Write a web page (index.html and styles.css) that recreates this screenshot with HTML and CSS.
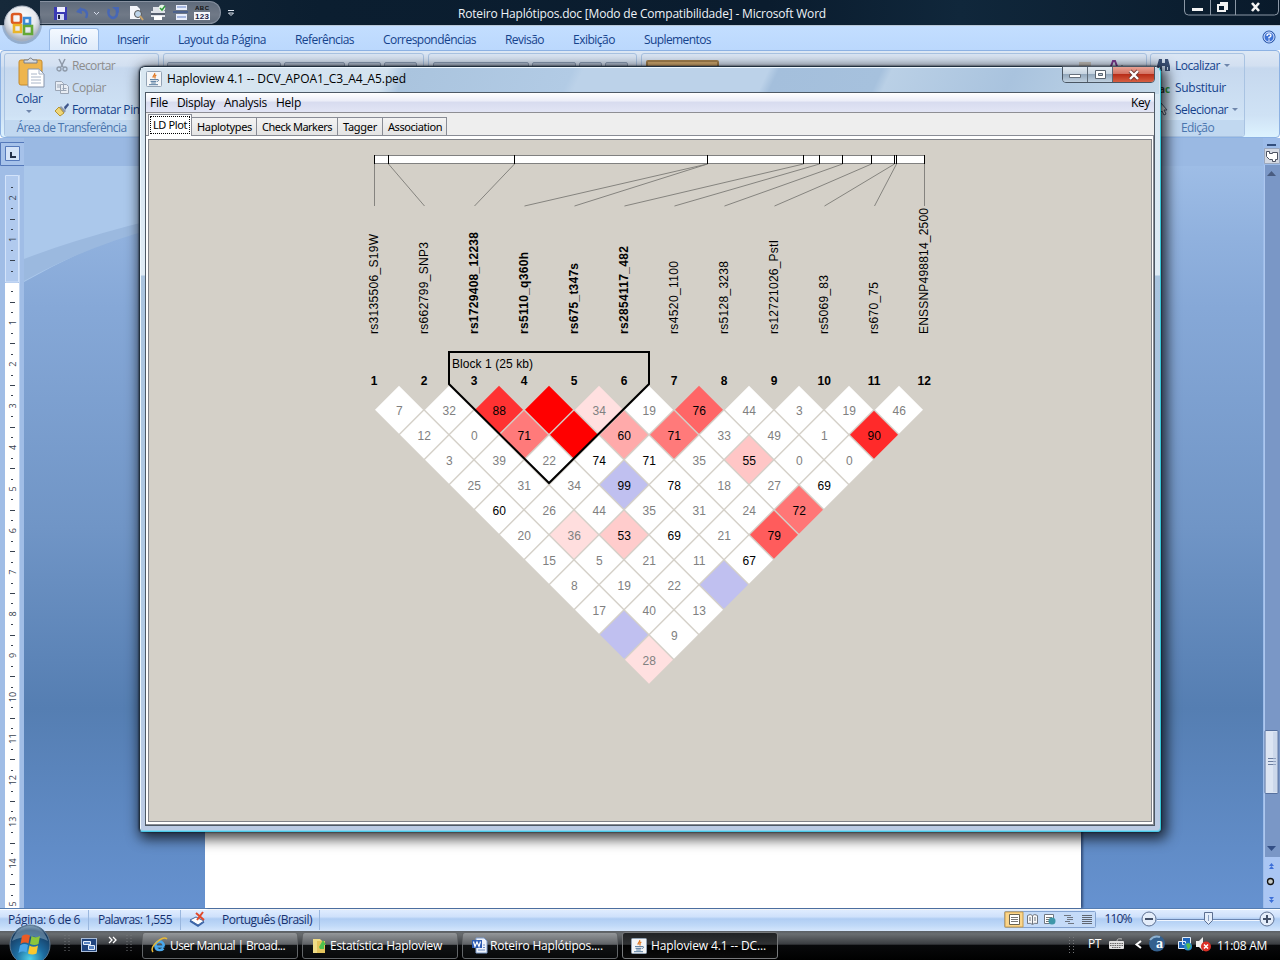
FILE: index.html
```html
<!DOCTYPE html>
<html lang="pt-BR">
<head>
<meta charset="utf-8">
<title>Roteiro Haplótipos.doc - Microsoft Word</title>
<link rel="stylesheet" href="styles.css">
</head>
<body>
<svg width="0" height="0" class="defs">
  <defs>
    <radialGradient id="orb" cx=".5" cy=".35" r=".65"><stop offset="0" stop-color="#fff"/><stop offset=".6" stop-color="#e6e9ee"/><stop offset="1" stop-color="#9ca6b5"/></radialGradient>
    <radialGradient id="start" cx=".5" cy=".85" r=".9"><stop offset="0" stop-color="#4fd0e8"/><stop offset=".4" stop-color="#1d6ba0"/><stop offset=".8" stop-color="#16395e"/><stop offset="1" stop-color="#8cabc4"/></radialGradient>
    <symbol id="java" viewBox="0 0 16 16"><rect x=".5" y=".5" width="15" height="15" rx="1" fill="#f4f6f8" stroke="#93a3b5"/><path d="M8.6 2c1.4 1.8-2.6 2.7-1.4 4.8M10.3 4c-2.4 1.2-1.6 2-1 3.4" fill="none" stroke="#e07822" stroke-width="1.2"/><path d="M4 8.6h7M4.6 10.4h5.6M5.2 12h4.6M3 13.7h9M11 8.6c2.4-.5 2 1.6-.2 2" fill="none" stroke="#557a9e"/></symbol>
  </defs>
</svg>
<div class="desktop">
  <header class="titlebar">
    <div class="quick">
      <svg width="181" height="22" viewBox="40 2 181 22">
        <path d="M54 7h13v13H54z" fill="#3a3ab4"/><path d="M57 7h8v5h-8z" fill="#eef"/><path d="M57 14h7v6h-7z" fill="#d5daf4"/><path d="M58 15h2v4h-2z" fill="#224"/>
        <path d="M78 11c6-4 11 1 8 7" fill="none" stroke="#4767b5" stroke-width="2.4"/><path d="M76 12l5-5 1 7z" fill="#4767b5"/>
        <path d="M94 12l2.500 2.500 2.500-2.500" fill="none" stroke="#d5dcec"/>
        <path d="M109 9c-3 9 7 12 8 5V8" fill="none" stroke="#4767b5" stroke-width="2.600"/><path d="M112 7h7v6z" fill="#4767b5"/>
        <path d="M130 6h7l3 3v10h-10z" fill="#f4f6fb"/><circle cx="138" cy="14" r="3.500" fill="#bdd4ea" stroke="#555"/><path d="M140 16l3 4" stroke="#c9a46a" stroke-width="2"/>
        <path d="M153 7h8v5h-8zM151 11h14v6h-14z" fill="#dfe2e8"/><path d="M151 13h14v2h-14z" fill="#555e6e"/><path d="M154 16h8v4h-8z" fill="#fff"/><circle cx="162" cy="8" r="3.200" fill="#e8f5e8"/><path d="M160 8l2 2 3-4" fill="none" stroke="#2f9a3c" stroke-width="1.500"/>
        <path d="M176 5h11v5h-11zM176 14h11v6h-11z" fill="#e8eefb"/><path d="M177 7h9M177 17h9" stroke="#6581c4"/><path d="M173 12h15" stroke="#2d4f96"/>
        <path d="M194 12h16v8h-16z" fill="#f4f6fb"/><text x="195" y="10" class="abc" textLength="14">ABC</text><text x="195" y="19" class="n123" textLength="14">123</text>
      </svg>
    </div>
    <svg class="more" width="8" height="8"><path d="M1 1.500h6M1.500 4h5L4 6.500z" fill="none" stroke="#dfe6f0"/></svg>
    <span class="doc-title" data-fit="368">Roteiro Haplótipos.doc [Modo de Compatibilidade] - Microsoft Word</span>
    <svg class="word-controls" width="96" height="17" viewBox="0 0 96 17"><path d="M.5 0v11q0 4 4 4h86q4 0 4-4V0M26.500 0v15M51.500 0v15" fill="none" stroke="#8b97a5"/><path d="M8 8h11v3H8z" fill="#f3f3f3"/><path d="M36 3h7v7M34 5h7v6h-7z" fill="none" stroke="#f3f3f3" stroke-width="2"/><path d="M68 3l7 8M75 3l-7 8" stroke="#f3f3f3" stroke-width="2.600"/></svg>
  </header>

  <nav class="tabs">
    <span class="tab on"><span data-fit="27">Início</span></span>
    <span data-fit="32">Inserir</span>
    <span data-fit="88">Layout da Página</span>
    <span data-fit="59">Referências</span>
    <span data-fit="93">Correspondências</span>
    <span data-fit="39">Revisão</span>
    <span data-fit="42">Exibição</span>
    <span data-fit="67">Suplementos</span>
    <svg class="help" width="14" height="14"><circle cx="7" cy="7" r="6" fill="#3f73d6" stroke="#234e9e"/><circle cx="7" cy="7" r="5" fill="none" stroke="#dce9ff"/><path d="M5 6q0-2.200 2-2.200T9 5.500Q9 6.600 7 7.400V8.500M7 9.400v1.400" fill="none" stroke="#fff" stroke-width="1.300"/></svg>
  </nav>

  <section class="ribbon">
    <div class="group clip">
      <div class="group-body">
        <div class="paste">
          <svg width="28" height="32" viewBox="0 0 28 32"><rect x="1" y="3" width="23" height="25" rx="2" fill="#eeb54e" stroke="#c48a2d"/><path d="M6 6V3h4q2.500-4 5 0h4v3z" fill="#d6dae0" stroke="#777f8b"/><path d="M10 12h11l5 5v13H10z" fill="#fff" stroke="#8694ab"/><path d="M21 12v5h5M13 17h6M13 20h10M13 23h10M13 26h10" fill="none" stroke="#aab6c8"/></svg>
          <span data-fit="27">Colar</span>
          <i class="caret"></i>
        </div>
        <div class="stack">
          <div class="row dim"><svg width="14" height="16"><path d="M4 2l4 8M10 2L6 10" stroke="#8e99a8" stroke-width="1.500"/><circle cx="4" cy="12" r="2" fill="none" stroke="#8e99a8" stroke-width="1.300"/><circle cx="10" cy="12" r="2" fill="none" stroke="#8e99a8" stroke-width="1.300"/></svg><span data-fit="43">Recortar</span></div>
          <div class="row dim"><svg width="14" height="16"><path d="M.5 2.500h6l2 2v7h-8zM5.500 5.500h6l2 2v7h-8z" fill="#e8edf4" stroke="#9aa5b5"/><path d="M2 6h3M2 8h3M7.500 9.500h4M7.500 11.500h4" stroke="#9aa5b5"/></svg><span data-fit="34">Copiar</span></div>
          <div class="row"><svg width="14" height="16"><path d="M9 6l4-4 1 2-4 5z" fill="#3f568c"/><path d="M6 5l5 5-2 2-5-5z" fill="#8f98a8"/><path d="M4 6l5 6-4 3-5-5z" fill="#efd678" stroke="#b4942f"/></svg><span data-fit="82">Formatar Pincel</span></div>
        </div>
      </div>
      <div class="group-name"><span data-fit="110">Área de Transferência</span></div>
    </div>
    <div class="group font"><i class="box b1"></i><i class="box b2"></i><i class="box b3"></i><i class="box b3"></i></div>
    <div class="group para"><i class="box b4"></i><i class="box b2"></i><i class="box b5"></i><i class="box b5"></i></div>
    <div class="group style"><i class="picked"></i><svg class="change" width="48" height="10"><path d="M2 2h12v8H2z" fill="#c5c1bc"/><path d="M33 9l3-8h2l3 8" fill="none" stroke="#7b3a8f" stroke-width="2"/><path d="M45 5v5" stroke="#666"/></svg></div>
    <div class="group edit">
      <div class="stack">
        <div class="row"><svg width="16" height="16"><path d="M3 2h3v4h3V2h3l2 7v5h-5V9H6v5H1V9z" fill="#3c5178"/><path d="M3 10h1v3H3zM11 10h1v3h-1z" fill="#cfe0f5"/></svg><span data-fit="45">Localizar</span><i class="caret"></i></div>
        <div class="row"><svg width="16" height="16"><text x="3" y="14" class="ac">a<tspan fill="#2f9a3c">c</tspan></text></svg><span data-fit="51">Substituir</span></div>
        <div class="row"><svg width="16" height="16"><path d="M5 2l6 7-3 0 2 4-2 1-2-4-2 2z" fill="#fff" stroke="#4b5b75"/></svg><span data-fit="53">Selecionar</span><i class="caret"></i></div>
      </div>
      <div class="group-name"><span data-fit="33">Edição</span></div>
    </div>
  </section>

  <main class="workspace">
    <div class="left-rail">
      <svg id="ruler" width="24" height="770" viewBox="0 138 24 770"></svg>
    </div>
    <div class="canvas">
      <svg class="swoosh" width="240" height="145" viewBox="24 138 240 145"><path d="M24 166H264V200Q150 211 24 282z" fill="#abc8eb"/><path d="M24 259Q110 226 264 195V208Q130 222 24 281z" fill="#9bb9df"/><path d="M24 138h240v28H24z" fill="#9ab9e3"/></svg>
      <div class="page"></div>
    </div>
    <svg class="scroll" width="17" height="770" viewBox="1263 138 17 770">
      <path d="M1263 138h17v770h-17z" fill="#9dbce9"/><path d="M1264 165h16v692h-16z" fill="#7a97c6"/><path d="M1264.500 165v692" stroke="#adc7ee"/>
      <path d="M1267 144h9v2h-9z" fill="#334f7d"/><path d="M1264.500 148.500h15v15h-15z" fill="#d4d9e3" stroke="#9ba8be"/><path d="M1266.500 151.500h3v2h3v-1h5v7h-2v2h-3v-2h-3l-3-3z" fill="#fff" stroke="#4c5262"/>
      <path d="M1267 176l4.500-5 4.500 5z" fill="#495c80"/>
      <rect x="1265" y="730.500" width="13" height="63" rx="1" fill="#dce5f3" stroke="#56709e"/><path d="M1268 758.500h8M1268 761.500h8M1268 764.500h8" stroke="#6a7d9f"/><path d="M1273 732h4v60h-4z" fill="#bccbe3" opacity=".5"/>
      <path d="M1267 846l4.500 5 4.500-5z" fill="#334f85"/><path d="M1264 857h16v51h-16z" fill="#aac6f3"/>
      <path d="M1269 866l2.500-3 2.500 3zM1269 869l2.500-3 2.500 3zM1269 897l2.500 3 2.500-3zM1269 900l2.500 3 2.500-3z" fill="#3d6fd8"/><circle cx="1270.500" cy="881.500" r="3" fill="#c5c9c5" stroke="#111" stroke-width="1.300"/>
    </svg>
  </main>

  <footer class="status">
    <span class="cell c1"><span data-fit="72">Página: 6 de 6</span></span>
    <span class="cell c2"><span data-fit="74">Palavras: 1,555</span></span>
    <svg class="proof" width="17" height="16"><path d="M1 9l6-3 8 4-6 4z" fill="#fff" stroke="#45679e"/><path d="M1 10l8 5 6-4" fill="none" stroke="#3b64a8" stroke-width="1.500"/><path d="M7 2l8 7M14 1L8 9" stroke="#e0492c" stroke-width="2"/></svg>
    <span class="cell c3"><span data-fit="90">Português (Brasil)</span></span>
    <svg class="views" width="276" height="22" viewBox="1004 909 276 22">
      <rect x="1004.500" y="911.500" width="91" height="16" rx="1" fill="#c5dbf8" stroke="#83a2cf"/><path d="M1005 912h18v15h-18z" fill="#fbd58a" stroke="#c79b4a"/>
      <path d="M1009.500 914.500h10v10h-10z" fill="#fff" stroke="#6b6450"/><path d="M1011 917.500h7M1011 919.500h7M1011 921.500h7" stroke="#777"/>
      <path d="M1027.500 915.500q3-2 5 0 2-2 5 0v8q-3-1-5 1-2-2-5-1zM1032.500 916v8M1029 918h2M1029 920h2M1034 918h2M1034 920h2" fill="#f7f7f7" stroke="#6f7681"/>
      <path d="M1044.500 914.500h9v9h-9z" fill="#fff" stroke="#6f7681"/><path d="M1046 917.500h6M1046 919.500h6M1046 921.500h4" stroke="#777"/><circle cx="1052" cy="921" r="3.500" fill="#3e96a8"/>
      <path d="M1064 915.500h7M1067 917.500h6M1067 919.500h6M1065 921.500h5M1068 923.500h6" stroke="#6f7681"/><path d="M1082 915.500h10M1082 917.500h10M1082 919.500h10M1082 921.500h10M1082 923.500h10" stroke="#5f6671"/>
      <text x="1104.500" y="923" class="zoomtxt" textLength="28">110%</text>
      <path d="M1157 919.500h103" stroke="#6c87b3"/><path d="M1157 920.500h103" stroke="#f0f6ff"/>
      <circle cx="1149" cy="919" r="7" fill="#e4edfa" stroke="#5c6f91"/><path d="M1145 919h8" stroke="#435068" stroke-width="2"/>
      <circle cx="1267" cy="919" r="7" fill="#e4edfa" stroke="#5c6f91"/><path d="M1263 919h8M1267 915v8" stroke="#435068" stroke-width="2"/>
      <path d="M1204.500 912.500h8v8l-4 4-4-4z" fill="#e4edfa" stroke="#5c6f91"/><path d="M1208.500 915v6" stroke="#8ba0c0"/>
    </svg>
  </footer>

  <div class="taskbar">
    <svg class="launch" width="142" height="29" viewBox="0 931 142 29">
      <path d="M65 935v18M69 935v18M127 935v18M131 935v18" stroke="#77797c" stroke-dasharray="1 2"/>
      <rect x="81.500" y="938.500" width="15" height="13" fill="#20447e" stroke="#a9bcd8"/><path d="M83.500 941.500h7v3h-7zM88.500 945.500h6v4h-6z" fill="#5b84c0" stroke="#e8f0fb"/>
      <path d="M109 937l3 3-3 3M113 937l3 3-3 3" fill="none" stroke="#fff" stroke-width="1.300"/>
    </svg>
    <div class="task"><svg width="17" height="17"><path d="M13.500 9.500H4.500q.5 3.500 4 3.500 2.500 0 4-1.500M4.500 8.500q.5-4 4-4t4.500 4.500" fill="none" stroke="#49a8ec" stroke-width="2.600"/><path d="M2 15Q-1 11 6 5T16 2" fill="none" stroke="#e8b936" stroke-width="1.500"/></svg><span data-fit="115">User Manual | Broad...</span></div>
    <div class="task"><svg width="17" height="17"><path d="M2 2h7l2 2v12H2z" fill="#f0dc86"/><path d="M6 4h8v12H6z" fill="#e4c45c"/><path d="M8 10l4-7 3 5h-2v4H9z" fill="#4fc04d"/></svg><span data-fit="112">Estatística Haploview</span></div>
    <div class="task"><svg width="17" height="17"><path d="M5 1h8l3 3v12H5z" fill="#eef3fc" stroke="#7f9ccc"/><path d="M1 3h10v8H1z" fill="#2c5bb4"/><path d="M2.500 4.500l1.500 5 2-4.500 2 4.500 1.500-5" fill="none" stroke="#fff" stroke-width="1.200"/><path d="M7 13h7M12 8h2M12 10.500h2" stroke="#6c8cc4"/></svg><span data-fit="113">Roteiro Haplótipos....</span></div>
    <div class="task pressed"><svg width="16" height="16"><use href="#java"/></svg><span data-fit="115">Haploview 4.1 -- DC...</span></div>
    <div class="tray">
      <svg width="8" height="24"><path d="M1.500 3v18M5.500 3v18" stroke="#77797c" stroke-dasharray="1 2"/></svg>
      <span class="lang" data-fit="13">PT</span>
      <svg class="devices" width="110" height="29" viewBox="1107 929 110 29">
        <rect x="1109" y="939" width="15" height="8" rx="1" fill="#e0e0e0"/><path d="M1110 941.500h13M1110 943.500h13M1112 945.500h9" stroke="#666" stroke-dasharray="1.500 .8"/><path d="M1117 939q0-3 5-2" fill="none" stroke="#bbb"/>
        <path d="M1141 939l-4.500 3.500 4.500 3.500" fill="none" stroke="#fff" stroke-width="2"/>
        <circle cx="1157" cy="941.500" r="8" fill="#34608e"/><path d="M1150 938q4-5 10-3" stroke="#8eb1d0" fill="none" stroke-width="2"/><text x="1156" y="946" class="avast">a</text>
        <path d="M1182.500 935.500h8v7h-8zM1178.500 939.500h7v7h-7z" fill="#1f65bb" stroke="#e4edf8"/><circle cx="1188" cy="944.500" r="4" fill="#2b8bc8"/><path d="M1186 942l3-1 2 3-3 4z" fill="#58be4b"/>
        <path d="M1196 939h3l4-4v14l-4-4h-3z" fill="#eee"/><circle cx="1206" cy="944.500" r="5" fill="#db2f26"/><path d="M1204 942.500l4 4M1208 942.500l-4 4" stroke="#fff" stroke-width="1.500"/>
      </svg>
      <span class="clock" data-fit="50">11:08 AM</span>
    </div>
  </div>
</div>

<svg class="office-orb" width="44" height="44"><circle cx="22" cy="21" r="20" fill="#17283a" opacity=".25"/><circle cx="22" cy="20.500" r="17.500" fill="url(#orb)" stroke="#a9b2c0"/><g fill="none" stroke-width="2.600"><rect x="12" y="11" width="9" height="9" rx="2" stroke="#dc5a22"/><path d="M24 15h6v6h-6z" stroke="#3b8bd6"/><path d="M14 22h7v7h-7z" stroke="#eab52a"/><path d="M24 23h8v8h-8z" stroke="#63a836"/></g></svg>
<svg class="start-orb" width="44" height="36"><circle cx="22" cy="21" r="20" fill="url(#start)" stroke="#5b7790"/><path d="M4 17q18-9 36 0Q35 2 22 2T4 17z" fill="#b4cfe0" opacity=".4"/><path d="M14 12q4-2.500 8-.5l-1.500 8q-4-2-8 .5z" fill="#ea5b26"/><path d="M23.500 12q4 2.500 8.500 0l-1.500 8q-4 2-8.500 0z" fill="#8cc63c"/><path d="M12 21.500q4-2.500 8-.5l-1.500 7.500q-4-2-8 .5z" fill="#4aa5e8"/><path d="M21.500 21.500q4 2.500 8.500 0l-1.500 8q-4 2-8.500 0z" fill="#fbc82e"/></svg>

<div class="window">
  <div class="win-title">
    <svg width="16" height="16"><use href="#java"/></svg>
    <span data-fit="239">Haploview 4.1 -- DCV_APOA1_C3_A4_A5.ped</span>
    <div class="win-buttons">
      <i class="wb"><svg width="25" height="16"><path d="M6.500 7.500h11v3h-11z" fill="#fff" stroke="#66707c"/></svg></i>
      <i class="wb"><svg width="25" height="16"><path d="M7.500 3.500h10v8h-10z" fill="#fff" stroke="#5a6470"/><path d="M10.500 6.500h4v2h-4z" fill="#bcc8d4" stroke="#5a6470"/></svg></i>
      <i class="wb close"><svg width="42" height="16"><path d="M17 4l8 8M25 4l-8 8" stroke="#6f3a35" stroke-width="4"/><path d="M17 4l8 8M25 4l-8 8" stroke="#fff" stroke-width="2.400"/></svg></i>
    </div>
  </div>
  <div class="client">
    <div class="menu"><span data-fit="18">File</span><span data-fit="38">Display</span><span data-fit="43">Analysis</span><span data-fit="25">Help</span><span class="key" data-fit="19">Key</span></div>
    <div class="plot-tabs">
      <div class="ptab active"><span data-fit="34">LD Plot</span></div>
      <div class="ptab"><span data-fit="55">Haplotypes</span></div>
      <div class="ptab wide"><span data-fit="70">Check Markers</span></div>
      <div class="ptab wide"><span data-fit="34">Tagger</span></div>
      <div class="ptab"><span data-fit="54">Association</span></div>
    </div>
    <div class="pane"><svg id="plot" width="1002" height="681" viewBox="149 140 1002 681"></svg></div>
  </div>
</div>
<script src="app.js"></script>
</body>
</html>
```

FILE: styles.css
```css
* { box-sizing: border-box; }
body { margin: 0; width: 1280px; height: 960px; overflow: hidden; position: relative; font: 12px/16px "Open Sans", "Noto Sans", sans-serif; color: #15428b; }
svg { display: block; flex: none; }
.defs { position: absolute; }
[data-fit] { display: inline-block; white-space: nowrap; flex: none; }
.desktop { width: 1280px; height: 960px; display: flex; flex-direction: column; }

.titlebar { height: 26px; flex: none; display: flex; align-items: flex-start; padding-left: 40px; background: linear-gradient(90deg, #16293a 0, #0b1e30 25%, #0a1c2e 60%, #10273b 75%, #091a2b 100%); border-bottom: 1px solid #b9c8d8; }
.quick { margin-top: 1px; width: 181px; height: 23px; border-radius: 0 12px 12px 0; background: linear-gradient(#5f6b7b, #707987 60%, #626d7c); border: 1px solid #8791a0; border-left: 0; }
.abc { font: bold 6px "Liberation Sans", sans-serif; fill: #111; }
.n123 { font: bold 8px "Liberation Sans", sans-serif; fill: #224; }
.more { margin: 9px 0 0 6px; }
.doc-title { margin: 6px 0 0 223px; color: #eef3f8; }
.word-controls { margin-left: auto; }

.tabs { height: 24px; flex: none; display: flex; gap: 29px; padding: 6px 4px 0 49px; background: linear-gradient(#c3deff, #bbd8fd); }
.tab.on { width: 50px; height: 22px; margin: -4px -11px 0 0; padding: 3px 0 0 10px; border: 1px solid #97b9e6; border-bottom: 0; border-radius: 3px 3px 0 0; background: linear-gradient(#f4f9ff, #dfebfa); }
.help { margin: -2px 0 0 auto; }

.ribbon { height: 88px; flex: none; display: flex; padding: 2px 2px 2px 3px; border: 1px solid #8db2e3; border-radius: 4px; background: linear-gradient(#dde8f5 0, #d3e0f1 17%, #c6d8ee 20%, #cfe2f5 75%, #ddf3ff 100%); }
.group { border: 1px solid #a9c3e2; border-radius: 3px; height: 84px; display: flex; flex: none; overflow: hidden; }
.clip { width: 155px; flex-direction: column; }
.group-body { height: 68px; display: flex; }
.paste { width: 50px; display: flex; flex-direction: column; align-items: center; padding: 3px 0 0 2px; }
.paste svg { margin-left: 2px; }
.paste span { margin: 2px 0 0 -4px; }
.caret { border: 3px solid transparent; border-top-color: #6f86ab; border-bottom: 0; }
.paste .caret { margin: 3px 0 0 -4px; }
.stack { display: flex; flex-direction: column; }
.row { height: 22px; display: flex; align-items: center; gap: 3px; flex: none; }
.row span { margin-top: 1px; }
.dim { color: #8d8d8d; }
.group-name { height: 16px; flex: none; text-align: center; line-height: 16px; color: #4a75ae; background: #c1d8f0; }
.clip .group-name { padding-right: 20px; }
.font { width: 261px; margin-left: 4px; padding: 8px 3px; }
.para { width: 209px; margin-left: 4px; padding: 8px 4px; }
.style { width: 506px; margin-left: 4px; padding: 6px 4px; }
.box { height: 20px; border: 1px solid #8b9db5; background: #b5c3d6; margin-right: 3px; border-radius: 2px; }
.b1 { width: 117px; } .b2 { width: 62px; } .b3 { width: 34px; } .b4 { width: 96px; } .b5 { width: 23px; }
.para .b2 { width: 44px; }
.picked { width: 73px; height: 24px; border: 2px solid #a3814e; background: #d5ad72; border-radius: 2px; }
.change { margin-left: 358px; }
.edit { width: 95px; margin-left: 3px; flex-direction: column; }
.edit .stack { height: 68px; padding-left: 5px; }
.edit .caret { margin-left: 1px; }
.ac { font: bold 10px "Open Sans", sans-serif; fill: #333; }

.workspace { height: 770px; flex: none; display: flex; background: linear-gradient(#9ab9e3 0, #9ab9e3 28px, #9ebde6 28px, #90b1de 100px, #86a8d7 170px, #7095c6 390px, #557eb2 570px, #6692d0 100%); }
.left-rail { width: 24px; background: #a0bde6; }
.canvas { width: 1239px; display: flex; align-items: flex-end; }
.swoosh { align-self: flex-start; margin-right: -240px; }
.page { width: 876px; height: 690px; margin-left: 181px; background: #fff; box-shadow: 2px 0 2px #35517e; z-index: 1; }

.status { height: 23px; flex: none; display: flex; align-items: center; color: #15306f; border-top: 1px solid #567db1; background: linear-gradient(#e2eeff 0, #cfe1fb 35%, #b0cdf3 45%, #c0d9f8 75%, #d5e6fc 100%); box-shadow: inset 0 1px #fff; }
.cell { height: 20px; padding-top: 2px; border-right: 1px solid #9ab7de; }
.c1 { width: 89px; padding-left: 8px; } .c2 { width: 92px; padding-left: 9px; }
.c3 { width: 106px; padding-left: 8px; margin-left: 8px; }
.proof { margin: -2px 0 0 8px; }
.views { margin-left: auto; }
.zoomtxt { font: 12px "Open Sans", sans-serif; fill: #15306f; }

.taskbar { height: 29px; flex: none; display: flex; color: #fff; background: linear-gradient(#5b6065 0, #696d70 10%, #3b3e42 45%, #08090b 50%, #000 100%); }
.task { width: 156px; height: 27px; margin: 1px 4px 0 0; padding: 0 0 0 8px; display: flex; align-items: center; gap: 2px; border: 1px solid #626568; border-radius: 3px; background: linear-gradient(#94979a 0, #606367 45%, #101214 50%, #08090a 100%); flex: none; }
.pressed { gap: 4px; background: linear-gradient(#202224, #303234 45%, #030303 50%, #0a0a0a); border-color: #77797b; }
.tray { flex: 1; display: flex; align-items: center; padding-left: 286px; }
.lang { margin-left: 12px; margin-top: -4px; }
.devices { margin-left: 6px; }
.avast { font: bold 14px "Liberation Serif", serif; fill: #fff; }

.office-orb { position: absolute; left: 0; top: 3px; }
.start-orb { position: absolute; left: 8px; top: 924px; }

.window { position: absolute; z-index: 2; left: 139px; top: 66px; width: 1022px; height: 766px; padding: 0 6px; border-radius: 6px 6px 4px 4px; border: 1px solid #20303f; border-right-color: #35c8d8; border-bottom-color: #4ac7e6; background: linear-gradient(#d7e6f2 0, #dfebf5 208px, #aac4df 209px, #b2cbe5 75%, #bccbe4 100%); box-shadow: inset 1px 1px #eef8ff, inset 0 -1px #8bd5ee, 3px 4px 13px 3px rgba(0,0,0,.72), 0 0 2px #001; color: #000; }
.win-title { height: 26px; margin: 1px -5px 0; padding: 3px 4px 0 5px; display: flex; gap: 5px; background: linear-gradient(115deg, #d9e7f1 0, #d3e2ef 24%, #aac4de 26%, #b2cbe5 42%, #bcd2e9 43%, #bcd2e9 61%, #a4bfdc 62%, #a6c1dd 72%, #bad0e6 73%, #a9c3de 85%, #c4d8e9 100%); }
.win-buttons { margin: -5px 0 0 auto; display: flex; height: 17px; width: 93px; border: 1px solid #4a5663; border-radius: 0 0 4px 4px; overflow: hidden; }
.wb { width: 25px; border-right: 1px solid #5c6875; background: linear-gradient(#e1eaf2, #c4d2df 48%, #93a8bc 50%, #c0d1e0); }
.close { width: 42px; border: 0; background: linear-gradient(#e8a294, #d27060 48%, #b82d18 50%, #d65f42); }
.client { width: 1010px; height: 734px; margin: -2px 0 0 -1px; border: 1px solid #4d5965; background: #eee; }
.menu { height: 20px; display: flex; gap: 9px; padding: 3px 4px 0; line-height: 14px; border-bottom: 1px solid #8e8e94; background: linear-gradient(#fff, #eceef8 40%, #d8dcef 50%, #e2e5f5); }
.key { margin-left: auto; }
.plot-tabs { height: 22px; display: flex; align-items: flex-end; padding-left: 2px; font: 11px/14px "Noto Sans", sans-serif; }
.ptab { height: 18px; padding: 2px 4px 0 5px; border: 1px solid #898c95; border-left: 0; border-bottom: 0; background: linear-gradient(#f3f3f3, #e4e4e4); }
.wide { padding-right: 5px; }
.active { position: relative; height: 22px; width: 44px; margin-bottom: -1px; padding: 3px 4px 0; background: #fff; border-left: 1px solid #898c95; outline: 1px dotted #000; outline-offset: -3px; }
.pane { height: 690px; padding: 4px 2px 3px 3px; border: 1px solid #898c95; border-left: 0; background: #fff; }
.pane svg { outline: 1px solid #808288; background: #d4d0c8; }
#plot text { font: 12px "Liberation Sans", sans-serif; }
#plot .b { font-weight: bold; }
#ruler text { font: 9px "Open Sans", sans-serif; fill: #39424f; text-anchor: middle; }
```

FILE: app.js
```js
const NS = 'http://www.w3.org/2000/svg';
function add(parent, tag, attrs, text) {
  const el = document.createElementNS(NS, tag);
  for (const k in attrs) el.setAttribute(k, attrs[k]);
  if (text !== undefined) el.textContent = text;
  parent.appendChild(el);
  return el;
}

// Spread each label over its nominal width.
document.querySelectorAll('[data-fit]').forEach(el => {
  const want = +el.dataset.fit;
  const have = el.getBoundingClientRect().width;
  el.style.letterSpacing = (want - have) / el.textContent.length + 'px';
  el.style.width = want + 'px';
});

// Tab-stop selector and vertical ruler, one centimetre every 41.6px.
const ruler = document.getElementById('ruler');
add(ruler, 'path', { d: 'M.5 142.5h24v23H.5z', fill: '#a6c2ea', stroke: '#5579ba' });
add(ruler, 'path', { d: 'M5.500 146.500h14v14h-14z', fill: '#d4e3f8', stroke: '#5579ba' });
add(ruler, 'path', { d: 'M11 152v5h5', fill: 'none', stroke: '#22304a', 'stroke-width': 2 });
add(ruler, 'path', { d: 'M5.5 175.5h13V282h-13z', fill: '#b1caee', stroke: '#d3e3fa' });
add(ruler, 'path', { d: 'M5 283h14v625H5z', fill: '#fff' });
add(ruler, 'path', { d: 'M19.5 175v733', stroke: '#c3d6f1' });
for (let q = -9; q < 60; q++) {
  const y = 281 + q * 10.4;
  if (q === 0) continue;
  if (q % 4 === 0) add(ruler, 'text', { transform: `translate(15.5 ${y}) rotate(-90)` }, Math.abs(q / 4));
  else {
    const yy = Math.round(y) + .5;
    add(ruler, 'path', { d: q % 2 === 0 ? `M10 ${yy}h5` : `M11 ${yy}h2`, stroke: '#39424f' });
  }
}
add(ruler, 'text', { transform: 'translate(15.5 904) rotate(-90)' }, '5');

// Linkage disequilibrium plot.
const plot = document.getElementById('plot');
const names = [
  ['rs3135506_S19W', 374.5, 100], ['rs662799_SNP3', 388.5, 92], ['rs1729408_12238', 514.5, 102, 1],
  ['rs5110_q360h', 707.5, 82, 1], ['rs675_t347s', 707.5, 71, 1], ['rs2854117_482', 803.5, 88, 1],
  ['rs4520_1100', 819.5, 73], ['rs5128_3238', 842.5, 73], ['rs12721026_PstI', 871.5, 94],
  ['rs5069_83', 894.5, 59], ['rs670_75', 896.5, 52], ['ENSSNP498814_2500', 924.5, 126]
];
const cells = [
  ['7', '32', '88#ff3232', '#ff0000', '34#ffe0e0', '19', '76#ff6666', '44', '3', '19', '46'],
  ['12', '0', '71#ff7a7a', '#ff0000', '60#ffaaaa', '71#ff7a7a', '33', '49', '1', '90#ff2a2a'],
  ['3', '39', '22', '74', '71', '35', '55#ffc6c6', '0', '0'],
  ['25', '31', '34', '99#c0c0f0', '78', '18', '27', '69'],
  ['60', '26', '44', '35', '31', '24', '72#ff7676'],
  ['20', '36#ffdede', '53#ffcccc', '69', '21', '79#ff5c5c'],
  ['15', '5', '21', '11', '67'],
  ['8', '19', '22', '#c0c0f0'],
  ['17', '40', '13'],
  ['#c0c0f0', '9'],
  ['28#ffe0e0']
];
add(plot, 'path', { d: 'M374.5 155.5h550v8h-550z', fill: '#fff', stroke: '#808080' });
names.forEach(([name, tick, len, bold], i) => {
  const x = 374.5 + 50 * i;
  add(plot, 'path', { d: `M${tick} 164L${x} 206`, stroke: '#7c7a76', 'stroke-width': .9 });
  add(plot, 'path', { d: `M${tick} 155v9`, stroke: '#000' });
  add(plot, 'text', { transform: `translate(${x + 3.5} 334) rotate(-90)`, textLength: len, class: bold ? 'b' : '' }, name);
  add(plot, 'text', { x: x - .3, y: 385, 'text-anchor': 'middle', class: 'b' }, i + 1);
});
cells.forEach((row, r) => row.forEach((cell, i) => {
  const [value, fill] = cell.split('#');
  const x = 399 + 25 * r + 50 * i, y = 409.7 + 25 * r;
  add(plot, 'path', { d: `M${x - 24} ${y}l24 -24l24 24l-24 24z`, fill: fill ? '#' + fill : '#fff' });
  if (value) add(plot, 'text', {
    x: x + .3, y: y + 5.3, 'text-anchor': 'middle', fill: +value > 50 ? '#000' : '#808080'
  }, value);
}));
add(plot, 'path', { d: 'M449 352H649V384L549 483L449 384z', fill: 'none', stroke: '#000', 'stroke-width': 2 });
add(plot, 'text', { x: 452, y: 368, textLength: 81 }, 'Block 1 (25 kb)');
```
